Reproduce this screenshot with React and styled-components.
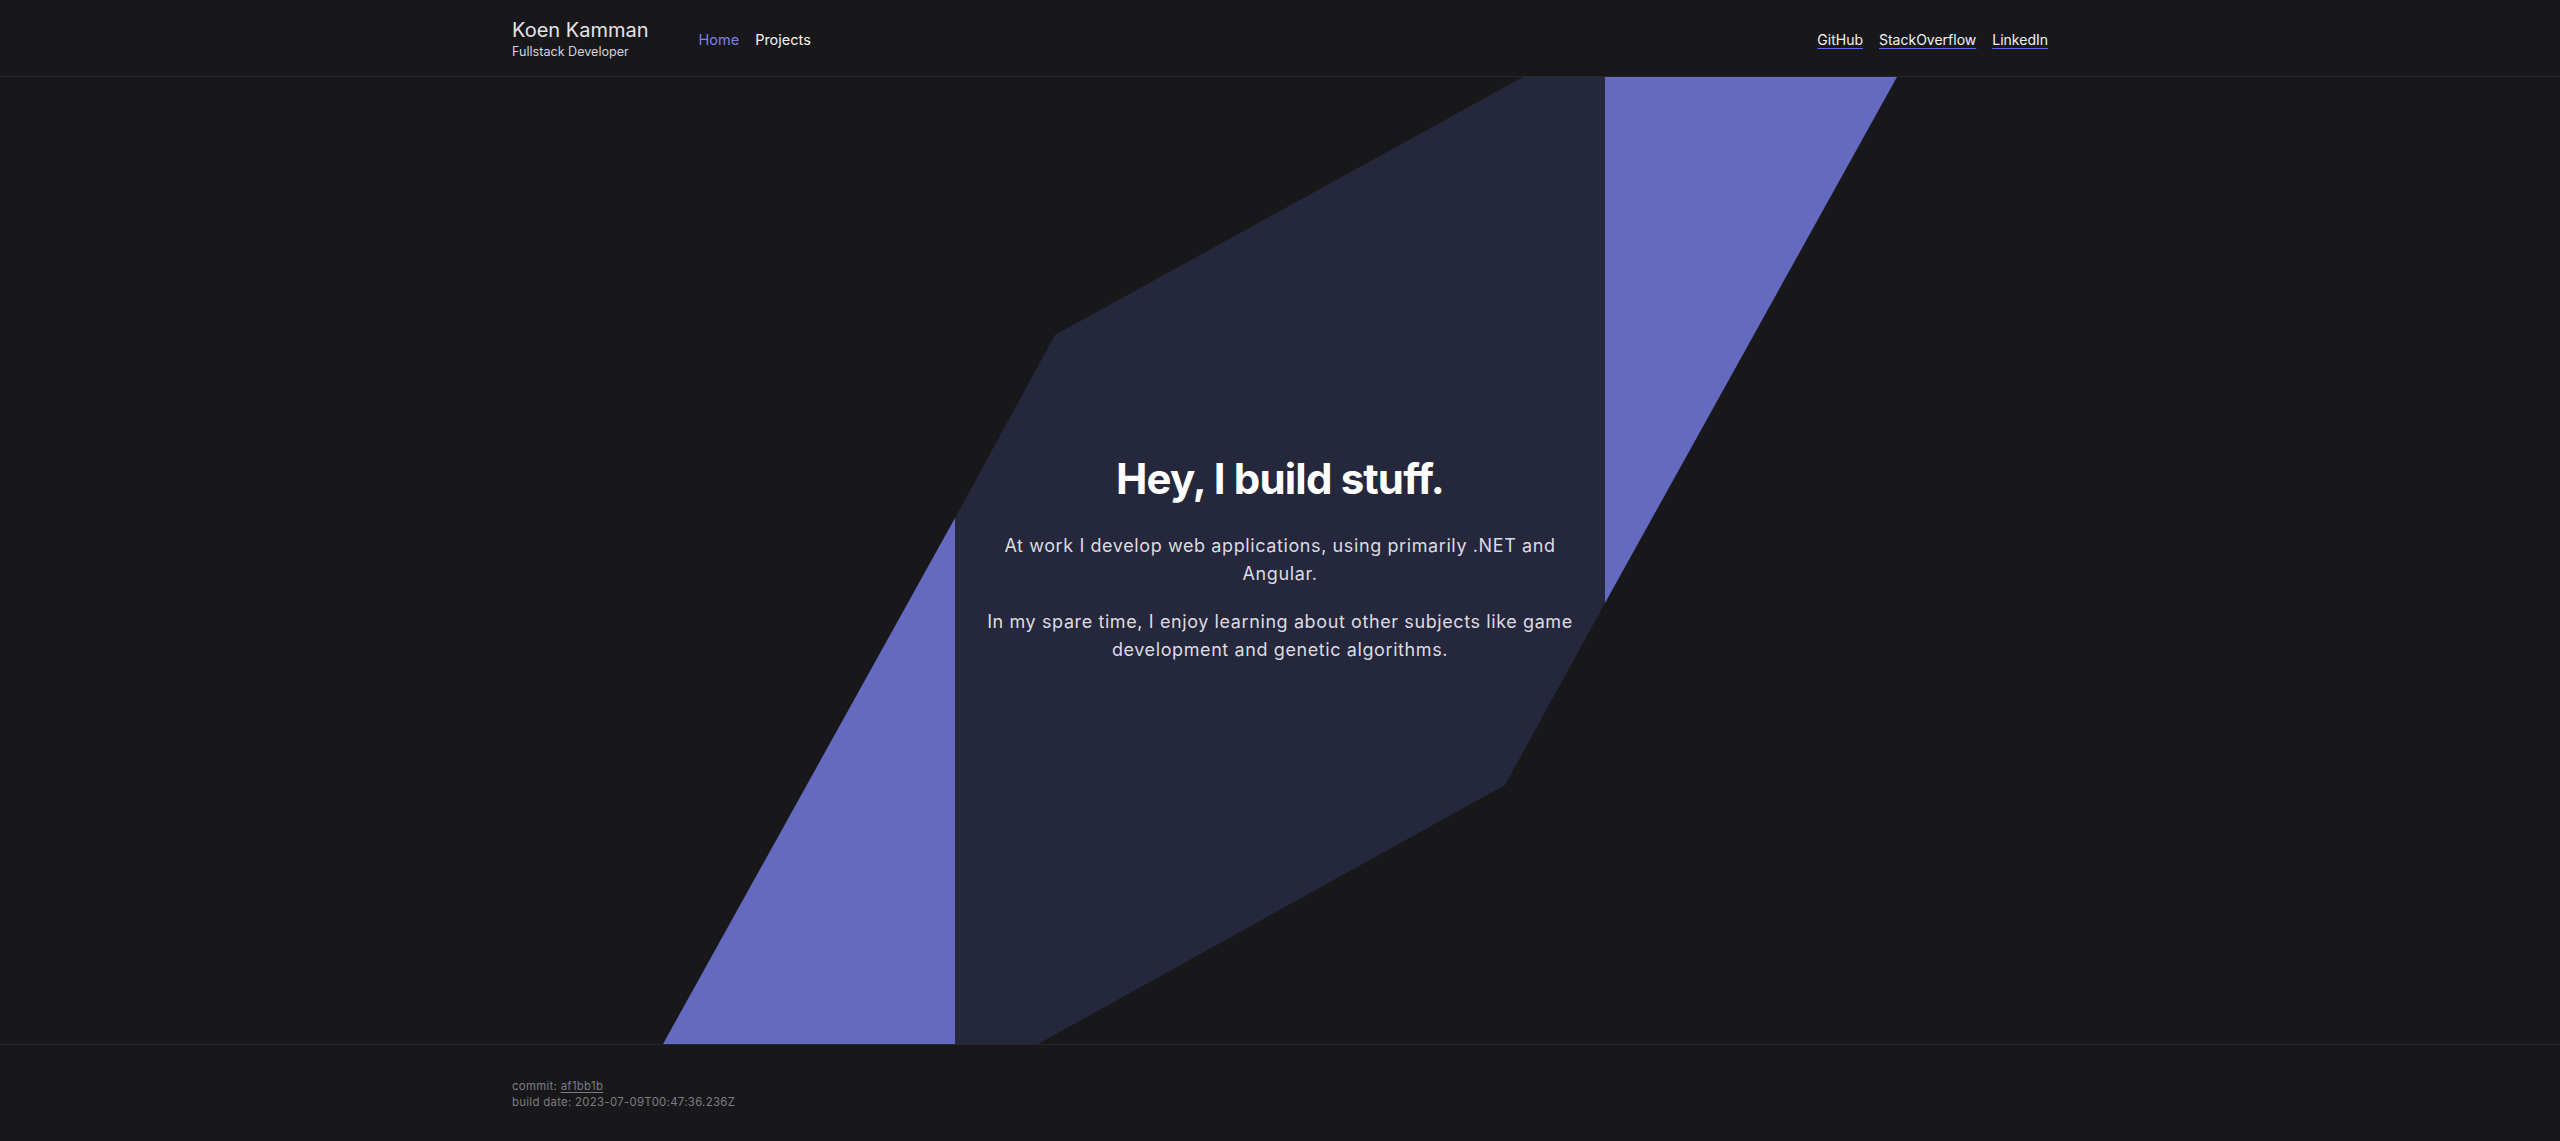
import styled, { createGlobalStyle } from "styled-components"

const GlobalStyle = createGlobalStyle`
  html, body {
    margin: 0;
    padding: 0;
    background: #18181b;
    font-family: Inter, "Noto Sans", sans-serif;
    color: #f4f4f5;
  }
  * { box-sizing: border-box; }
`;

const Page = styled.div`
    min-height: 100vh;
    display: flex;
    flex-direction: column;
`;

const Header = styled.header`
    height: 77px;
    border-bottom: 1px solid #27272a;
    display: flex;
`;

const Container = styled.div`
    width: 100%;
    max-width: 1536px;
    margin: 0 auto;
    display: flex;
    align-items: center;
    justify-content: space-between;
`;

const Left = styled.div`
    display: flex;
    align-items: center;
    gap: 50px;
`;

const Brand = styled.div`
    display: flex;
    flex-direction: column;
`;

const Name = styled.span`
    font-size: 20px;
    line-height: 28px;
    font-weight: 400;
    color: #e4e4e7;
`;

const Role = styled.span`
    font-size: 12.6px;
    line-height: 16px;
    color: #d4d4d8;
`;

const Nav = styled.nav`
    display: flex;
    gap: 16px;
    padding-top: 4px;
`;

const NavLink = styled.a`
    font-size: 14.5px;
    line-height: 20px;
    font-weight: 400;
    text-decoration: none;
    color: ${(p) => (p.$active ? "#7c82e6" : "#f4f4f5")};
`;

const Socials = styled.div`
    display: flex;
    gap: 16px;
    padding-top: 4px;
`;

const Social = styled.a`
    font-size: 14px;
    line-height: 20px;
    color: #f4f4f5;
    text-decoration: underline;
    text-decoration-color: #6366f1;
    text-underline-offset: 3px;
`;

const Main = styled.main`
    flex: 1;
    position: relative;
    overflow: hidden;
    display: flex;
    align-items: center;
    justify-content: center;
    padding-bottom: 3px;
`;

const Backdrop = styled.svg`
    position: absolute;
    inset: 0;
    width: 100%;
    height: 100%;
`;

const Intro = styled.section`
    position: relative;
    width: 608px;
    text-align: center;
`;

const Title = styled.h1`
    margin: 0 0 29px;
    font-size: 42px;
    line-height: 48px;
    font-weight: 700;
    letter-spacing: -0.02em;
    color: #ffffff;
`;

const Text = styled.p`
    margin: 0 0 20px;
    font-size: 18px;
    line-height: 28px;
    letter-spacing: 0.6px;
    color: #dcdce0;
    &:last-child { margin-bottom: 0; }
`;

const Footer = styled.footer`
    border-top: 1px solid #27272a;
    padding: 33px 0 31px;
`;

const FooterInner = styled.div`
    max-width: 1536px;
    margin: 0 auto;
    font-size: 11.4px;
    line-height: 16px;
    letter-spacing: 0.3px;
    color: #7d7d80;
`;

const Commit = styled.a`
    color: #7d7d80;
    text-decoration: underline;
    text-underline-offset: 2px;
`;

const Shapes = () => (
  <Backdrop viewBox="0 0 2560 967" preserveAspectRatio="xMidYMid slice">
    <polygon points="1605,0 1897,0 1605,526" fill="#636ac0" />
    <polygon points="955,441 955,967 663,967" fill="#636ac0" />
    <polygon
      points="1523,0 1605,0 1605,526 1505,708 1038,967 955,967 955,441 1055,258"
      fill="#25273c"
    />
  </Backdrop>
)

const App = () => {
  return (
    <Page>
      <GlobalStyle />
      <Header>
        <Container>
          <Left>
            <Brand>
              <Name>Koen Kamman</Name>
              <Role>Fullstack Developer</Role>
            </Brand>
            <Nav>
              <NavLink href="#" $active>Home</NavLink>
              <NavLink href="#">Projects</NavLink>
            </Nav>
          </Left>
          <Socials>
            <Social href="#">GitHub</Social>
            <Social href="#">StackOverflow</Social>
            <Social href="#">LinkedIn</Social>
          </Socials>
        </Container>
      </Header>
      <Main>
        <Shapes />
        <Intro>
          <Title>Hey, I build stuff.</Title>
          <Text>At work I develop web applications, using primarily .NET and Angular.</Text>
          <Text>In my spare time, I enjoy learning about other subjects like game development and genetic algorithms.</Text>
        </Intro>
      </Main>
      <Footer>
        <FooterInner>
          <div>commit: <Commit href="#">af1bb1b</Commit></div>
          <div>build date: 2023-07-09T00:47:36.236Z</div>
        </FooterInner>
      </Footer>
    </Page>
  )
}

export default App
